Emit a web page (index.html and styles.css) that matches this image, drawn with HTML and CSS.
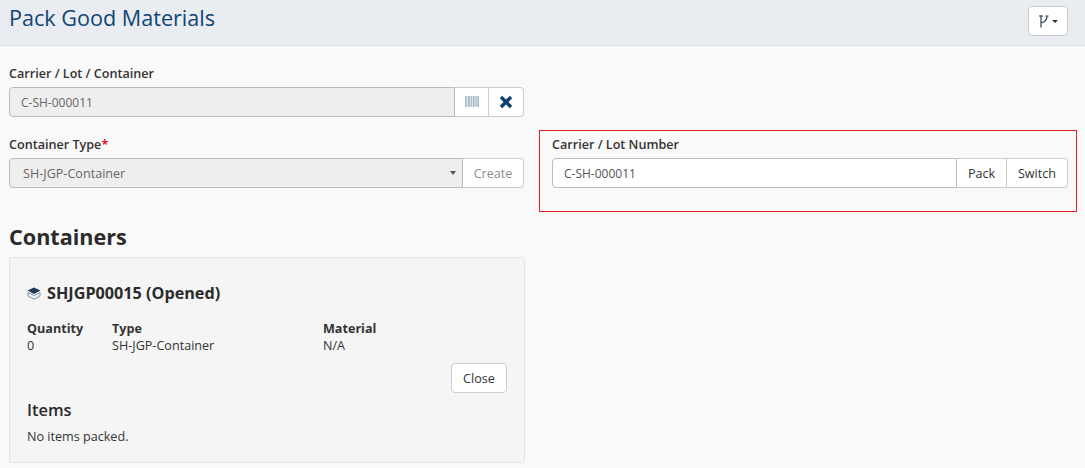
FILE: index.html
```html
<!DOCTYPE html>
<html lang="en">
<head>
    <meta charset="UTF-8">
    <title>Pack Good Materials</title>
    <link rel="stylesheet" href="styles.css">
</head>
<body>

    <!-- Header Section -->
    <header class="page-header">
        <h1>Pack Good Materials</h1>
        <button class="btn tool-btn" type="button">
            <svg class="fork-icon" width="10" height="13" viewBox="0 0 10 13">
                <path d="M2 0.500V12.500M2 8C6 7 8 5 8 1" fill="none" stroke="#24455f" stroke-width="1.200"/>
                <path d="M0 1H4M6.500 1H9.500" fill="none" stroke="#24455f" stroke-width="1"/>
            </svg>
            <span class="caret"></span>
        </button>
    </header>

    <!-- Main Content Section -->
    <div class="content">
        <div class="left-col">
            <div class="field first-field">
                <label>Carrier / Lot / Container</label>
                <div class="input-group">
                    <input class="input disabled" type="text" value="C-SH-000011" disabled>
                    <button class="btn addon barcode-btn" type="button">
                        <svg width="14" height="12" viewBox="0 0 14 12">
                            <rect width="14" height="11" fill="#dfe5ec"/>
                            <path d="M0 0h1.500v11H0zM3 0h2v11H3zM6 0h1v11H6zM8 0h1.500v11H8zM10.500 0h1v11h-1zM12.500 0h1.500v11h-1.500z" fill="#a9bbcd"/>
                        </svg>
                    </button>
                    <button class="btn addon clear-btn" type="button">
                        <svg width="14" height="14" viewBox="0 0 14 14">
                            <path d="M2 2L12 12M12 2L2 12" fill="none" stroke="#0f3f6e" stroke-width="3.400"/>
                        </svg>
                    </button>
                </div>
            </div>

            <div class="field">
                <label>Container Type<span class="required">*</span></label>
                <div class="input-group">
                    <div class="input disabled select-box">
                        <span>SH-JGP-Container</span>
                        <span class="select-arrow"></span>
                    </div>
                    <button class="btn addon create-btn" type="button">Create</button>
                </div>
            </div>

            <h2>Containers</h2>

            <div class="well">
                <h3>
                    <svg class="box-icon" width="14" height="13" viewBox="0 0 14 13">
                        <path d="M7 0.500L13.500 3.500L7 7L0.500 3.500Z" fill="#1f3a55"/>
                        <path d="M1 5.500L7 8.500L13 5.500V9L7 12.300L1 9Z" fill="#eef1f4" stroke="#7f8fa0" stroke-width="1"/>
                    </svg>
                    SHJGP00015 (Opened)
                </h3>
                <div class="info-row">
                    <div class="info-qty"><strong>Quantity</strong><br>0</div>
                    <div class="info-type"><strong>Type</strong><br>SH-JGP-Container</div>
                    <div><strong>Material</strong><br>N/A</div>
                </div>
                <div class="actions">
                    <button class="btn close-btn" type="button">Close</button>
                </div>
                <h4>Items</h4>
                <p>No items packed.</p>
            </div>
        </div>

        <div class="right-col">
            <div class="pack-box">
                <label>Carrier / Lot Number</label>
                <div class="input-group">
                    <input class="input" type="text" value="C-SH-000011">
                    <button class="btn addon pack-btn" type="button">Pack</button>
                    <button class="btn addon switch-btn" type="button">Switch</button>
                </div>
            </div>
        </div>
    </div>

</body>
</html>
```

FILE: styles.css
```css
* {
    box-sizing: border-box;
}

html, body {
    height: 468px;
    overflow: hidden;
}

body {
    font-family: "Open Sans", Arial, sans-serif;
    font-size: 12.6px;
    line-height: 17px;
    color: #333;
    background-color: #f9f9f9;
    margin: 0;
}

.page-header {
    height: 46px;
    background-color: #e9ecf1;
    border-bottom: 1px solid #dfe2e7;
    padding: 6px 17px 0 9px;
    display: flex;
    justify-content: space-between;
    align-items: flex-start;
}

h1 {
    margin: 0;
    font-size: 21.6px;
    line-height: 24px;
    font-weight: 400;
    color: #0f4674;
}

.btn {
    font-family: inherit;
    font-size: 12.6px;
    color: #333;
    background-color: #fff;
    border: 1px solid #ccc;
    border-radius: 4px;
    padding: 0 11px;
    height: 30px;
    cursor: pointer;
}

.tool-btn {
    width: 40px;
    padding: 0;
    display: flex;
    align-items: center;
    justify-content: center;
    gap: 3px;
}

.caret {
    width: 0;
    height: 0;
    border-left: 3px solid transparent;
    border-right: 3px solid transparent;
    border-top: 3px solid #333;
}

.content {
    display: flex;
    padding: 0 8px 0 9px;
    gap: 15px;
}

.left-col {
    width: 515px;
    flex-shrink: 0;
}

.right-col {
    flex-grow: 1;
    padding-top: 84px;
}

label {
    display: block;
    font-weight: 600;
    line-height: 17px;
    margin-bottom: 5px;
}

.field {
    margin-bottom: 19px;
}

.field + .field {
    margin-bottom: 36px;
}

.first-field {
    padding-top: 19px;
}

.required {
    color: #e00000;
}

.input-group {
    display: flex;
    height: 30px;
}

.input {
    flex-grow: 1;
    min-width: 0;
    height: 30px;
    font-family: inherit;
    font-size: 12px;
    color: #555;
    background-color: #fff;
    border: 1px solid #bbb;
    border-radius: 4px 0 0 4px;
    padding: 0 11px;
}

.disabled {
    background-color: #eee;
    color: #666;
    border-color: #bbb;
}

.select-box {
    font-size: 12.6px;
    display: flex;
    align-items: center;
    justify-content: space-between;
    padding: 0 6px 0 13px;
}

.select-arrow {
    width: 0;
    height: 0;
    border-left: 3px solid transparent;
    border-right: 3px solid transparent;
    border-top: 4px solid #555;
}

.addon {
    border-radius: 0;
    border-left: 0;
    flex-shrink: 0;
}

.addon:last-child {
    border-radius: 0 4px 4px 0;
}

.barcode-btn {
    width: 34px;
    padding: 0;
    display: flex;
    align-items: center;
    justify-content: center;
}

.clear-btn {
    width: 35px;
    padding: 0;
    display: flex;
    align-items: center;
    justify-content: center;
}

.create-btn {
    width: 61px;
    padding: 0;
    color: #8d8d8d;
}

.pack-btn {
    width: 50px;
    padding: 0;
}

.switch-btn {
    width: 61px;
    padding: 0;
}

.pack-box {
    height: 82px;
    border: 1px solid #ed1c24;
    padding: 5px 8px 0 12px;
}

h2 {
    margin: 0 0 7px;
    font-size: 21.6px;
    line-height: 26px;
    font-weight: 700;
    color: #2b2b2b;
}

.well {
    height: 206px;
    margin-right: -1px;
    background-color: #f5f5f5;
    border: 1px solid #e3e3e3;
    border-radius: 4px;
    padding: 24px 17px 0;
}

h3 {
    margin: 0 0 16px;
    font-size: 16.2px;
    line-height: 22px;
    font-weight: 700;
    color: #2b2b2b;
    display: flex;
    align-items: center;
    gap: 6px;
}

.info-row {
    display: flex;
}

.info-qty {
    width: 85px;
}

.info-type {
    width: 211px;
}

strong {
    font-weight: 700;
}

.actions {
    display: flex;
    justify-content: flex-end;
    margin-top: 9px;
}

.close-btn {
    width: 56px;
    padding: 0;
}

h4 {
    margin: 7px 0 8px;
    font-size: 16.4px;
    line-height: 20px;
    font-weight: 600;
    color: #2b2b2b;
}

p {
    margin: 0;
}
```
